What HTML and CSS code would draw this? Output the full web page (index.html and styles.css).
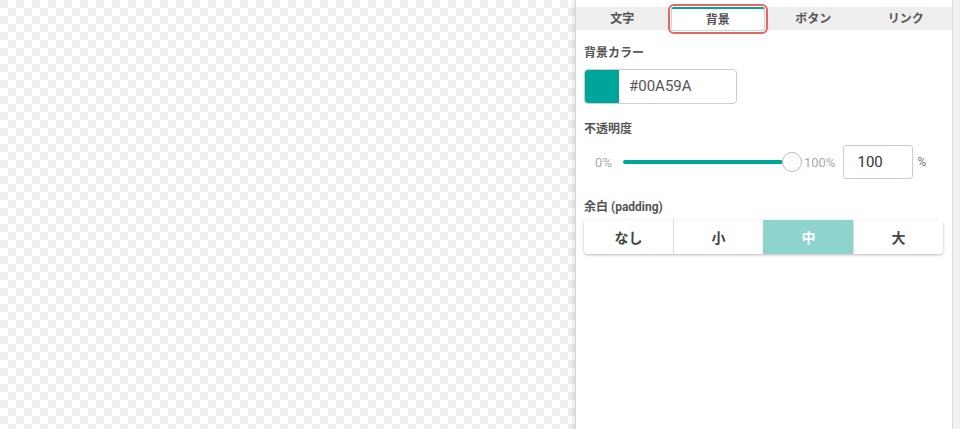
FILE: index.html
```html
<!DOCTYPE html>
<html lang="ja">
<head>
    <meta charset="UTF-8">
    <meta name="viewport" content="width=device-width, initial-scale=1.0">
    <title>スタイル設定</title>
    <link rel="stylesheet" href="styles.css">
</head>
<body>
    <div class="editor">
        <div class="canvas"></div>
        <div class="panel">
            <div class="tabs">
                <div class="tab">文字</div>
                <div class="tab active">背景</div>
                <div class="tab">ボタン</div>
                <div class="tab">リンク</div>
            </div>
            <div class="panel-body">
                <div class="field">
                    <div class="field-label">背景カラー</div>
                    <div class="color-input">
                        <span class="swatch"></span>
                        <span class="color-value">#00A59A</span>
                    </div>
                </div>
                <div class="field">
                    <div class="field-label">不透明度</div>
                    <div class="slider-row">
                        <span class="range-min">0%</span>
                        <div class="slider">
                            <div class="slider-track"></div>
                            <div class="slider-thumb"></div>
                        </div>
                        <span class="range-max">100%</span>
                        <div class="number-input">100</div>
                        <span class="unit">%</span>
                    </div>
                </div>
                <div class="field">
                    <div class="field-label">余白 (padding)</div>
                    <div class="btn-group">
                        <button class="seg">なし</button>
                        <button class="seg">小</button>
                        <button class="seg selected">中</button>
                        <button class="seg">大</button>
                    </div>
                </div>
            </div>
        </div>
        <div class="scroll-strip"></div>
    </div>
</body>
</html>
```

FILE: styles.css
```css
body {
    margin: 0;
    padding: 0;
    font-family: Roboto, "Noto Sans CJK JP", sans-serif;
    color: #555;
}
.editor {
    display: flex;
    height: 429px;
    overflow: hidden;
}
.canvas {
    flex: 1;
    background-color: #fff;
    background-image:
        linear-gradient(45deg, #eeeeee 25%, transparent 25%, transparent 75%, #eeeeee 75%),
        linear-gradient(45deg, #eeeeee 25%, transparent 25%, transparent 75%, #eeeeee 75%);
    background-size: 16px 16px;
    background-position: 8px 0, 0 8px;
}
.panel {
    width: 376px;
    background-color: #fff;
    border-left: 1px solid #d6d6d6;
    border-right: 1px solid #dcdcdc;
    box-shadow: -3px 0 4px rgba(0, 0, 0, 0.08);
    padding-top: 7px;
}
.scroll-strip {
    width: 7px;
    background-color: #f1f1f1;
}
.tabs {
    display: flex;
    background-color: #eeeeee;
    height: 23px;
}
.tab {
    flex: 1;
    text-align: center;
    font-size: 12px;
    font-weight: bold;
    line-height: 23px;
    padding-top: 1px;
    color: #555;
}
.tab.active {
    background-color: #fff;
    border-top: 2px solid #00a59a;
    border-left: 1px solid #b5e2de;
    border-right: 1px solid #b5e2de;
    border-bottom: 1px solid #b5e2de;
    line-height: 21px;
    height: 20px;
    padding-top: 1px;
    outline: 2px solid #e9665e;
    outline-offset: 1px;
    border-radius: 3px;
    margin: 0 2px;
}
.panel-body {
    padding: 14px 9px 0 8px;
}
.field {
    margin-bottom: 16px;
}
.field + .field {
    margin-bottom: 19px;
}
.field-label {
    font-size: 12px;
    font-weight: bold;
    line-height: 18px;
    margin-bottom: 7px;
    color: #555;
}
.color-input {
    display: flex;
    width: 153px;
    height: 35px;
    border: 1px solid #ccc;
    border-radius: 4px;
    box-sizing: border-box;
    overflow: hidden;
}
.swatch {
    width: 34px;
    background-color: #00a59a;
}
.color-value {
    padding-left: 10px;
    font-size: 15px;
    line-height: 33px;
    color: #555;
}
.slider-row {
    display: flex;
    align-items: center;
    height: 34px;
}
.range-min {
    width: 39px;
    text-align: center;
    font-size: 13px;
    color: #aaa;
}
.slider {
    display: flex;
    align-items: center;
}
.slider-track {
    width: 160px;
    height: 4px;
    background-color: #00a59a;
    border-radius: 2px;
}
.slider-thumb {
    width: 18px;
    height: 18px;
    margin-left: -1px;
    border: 1px solid #bbb;
    border-radius: 50%;
    background-color: #fff;
}
.range-max {
    margin-left: 2px;
    font-size: 13px;
    color: #aaa;
}
.number-input {
    width: 70px;
    height: 34px;
    margin-left: 8px;
    border: 1px solid #ccc;
    border-radius: 3px;
    box-sizing: border-box;
    padding-left: 13px;
    font-size: 15px;
    line-height: 32px;
    color: #333;
}
.unit {
    margin-left: 4px;
    font-size: 12px;
    color: #777;
}
.btn-group {
    display: flex;
    margin-top: -3px;
    border-radius: 4px;
    box-shadow: 0 1px 3px rgba(0, 0, 0, 0.28);
    overflow: hidden;
}
.seg {
    flex: 1;
    height: 34px;
    border: none;
    border-left: 1px solid #ddd;
    background-color: #fff;
    font-family: Roboto, "Noto Sans CJK JP", sans-serif;
    font-size: 14px;
    font-weight: bold;
    color: #444;
    cursor: pointer;
}
.seg:first-child {
    border-left: none;
}
.seg.selected {
    background-color: #8fd3cd;
    color: #fff;
    border-left-color: #8fd3cd;
}
```
